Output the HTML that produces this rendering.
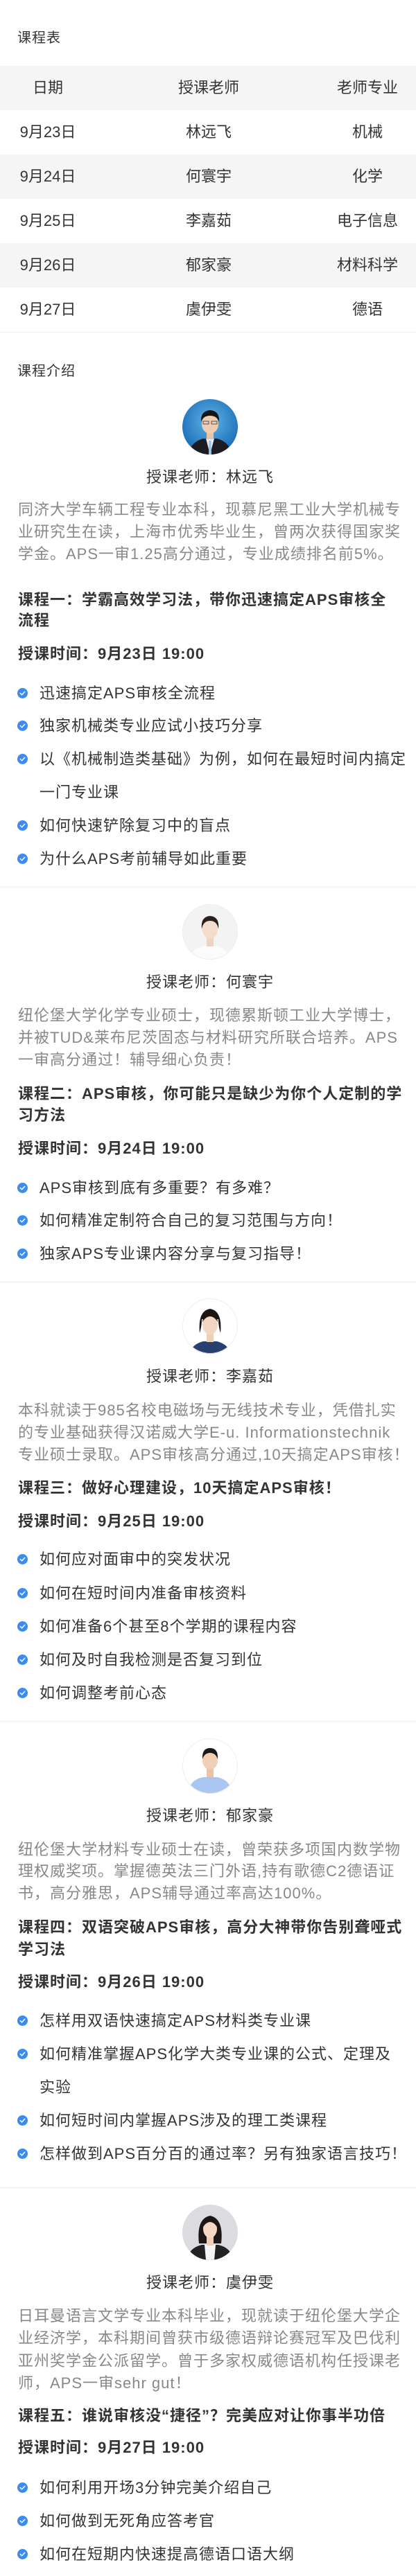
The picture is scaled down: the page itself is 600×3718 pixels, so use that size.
<!DOCTYPE html>
<html><head><meta charset="utf-8">
<style>
*{margin:0;padding:0;box-sizing:border-box}
body{width:600px;height:3718px;position:relative;background:#fff;font-family:"Liberation Sans","Noto Sans CJK SC",sans-serif;color:#333;overflow:hidden}
.t{position:absolute;left:26px;height:32px;line-height:32px;font-size:22px;letter-spacing:1px;white-space:nowrap}
.h{font-size:20px;left:25px}
.g{color:#888}
.b{font-weight:bold;color:#333}
.c{left:0;width:606px;text-align:center}
.li{left:57px}
.ic{position:absolute;left:25px;width:15px;height:15px}
.band{position:absolute;left:0;width:600px;height:64px;background:#f5f5f5}
.cell{position:absolute;height:32px;line-height:32px;font-size:22px;text-align:center;white-space:nowrap}
.c1{left:0;width:138px}.c2{left:200px;width:202px}.c3{left:460px;width:140px}
.div{position:absolute;left:0;width:600px;height:3px;background:#f7f7f7}
.av{position:absolute;left:263px;width:80px;height:80px}
</style></head><body>
<svg width="0" height="0" style="position:absolute"><defs><symbol id="ck" viewBox="0 0 15 15"><circle cx="7.5" cy="7.5" r="7.5" fill="#3a8cf4"/><path d="M4.3 7.6 L6.6 9.8 L10.7 5.4" fill="none" stroke="#fff" stroke-width="1.5" stroke-linecap="round" stroke-linejoin="round"/></symbol></defs></svg>

<div class="t h" style="top:39px">课程表</div>
<div class="band" style="top:95px"></div>
<div class="band" style="top:223px"></div>
<div class="band" style="top:351px"></div>
<div style="position:absolute;top:479px;left:0;width:600px;height:1px;background:#eee"></div>
<div class="cell c1" style="top:111px">日期</div><div class="cell c2" style="top:111px">授课老师</div><div class="cell c3" style="top:111px">老师专业</div>
<div class="cell c1" style="top:175px">9月23日</div><div class="cell c2" style="top:175px">林远飞</div><div class="cell c3" style="top:175px">机械</div>
<div class="cell c1" style="top:239px">9月24日</div><div class="cell c2" style="top:239px">何寰宇</div><div class="cell c3" style="top:239px">化学</div>
<div class="cell c1" style="top:303px">9月25日</div><div class="cell c2" style="top:303px">李嘉茹</div><div class="cell c3" style="top:303px">电子信息</div>
<div class="cell c1" style="top:367px">9月26日</div><div class="cell c2" style="top:367px">郁家豪</div><div class="cell c3" style="top:367px">材料科学</div>
<div class="cell c1" style="top:431px">9月27日</div><div class="cell c2" style="top:431px">虞伊雯</div><div class="cell c3" style="top:431px">德语</div>

<div class="t h" style="top:520px">课程介绍</div>

<!-- Section 1 -->
<svg class="av" style="top:576px" viewBox="0 0 80 80"><defs><clipPath id="a1"><circle cx="40" cy="40" r="40"/></clipPath><radialGradient id="g1" cx="50%" cy="40%" r="60%"><stop offset="0" stop-color="#5fb4e8"/><stop offset="1" stop-color="#1a6db5"/></radialGradient></defs><g clip-path="url(#a1)"><rect width="80" height="80" fill="url(#g1)"/><path d="M8 80 Q12 62 30 57 L50 57 Q68 62 72 80Z" fill="#1c1c22"/><path d="M34 57 L40 80 L46 57Z" fill="#e8eef5"/><path d="M38.5 60 L41.5 60 L42 80 L38 80Z" fill="#9cc3ea"/><rect x="35" y="46" width="10" height="12" fill="#e9c3a6"/><ellipse cx="40" cy="36" rx="12" ry="14" fill="#efcdb3"/><path d="M27 33 Q26 17 40 16 Q54 17 53 33 Q50 24 40 24 Q30 24 27 33Z" fill="#151515"/><rect x="30" y="32" width="8" height="4" fill="none" stroke="#333" stroke-width="0.8"/><rect x="42" y="32" width="8" height="4" fill="none" stroke="#333" stroke-width="0.8"/></g></svg>
<div class="t c" style="top:673px">授课老师：林远飞</div>
<div class="t g" style="top:720px">同济大学车辆工程专业本科，现慕尼黑工业大学机械专</div>
<div class="t g" style="top:752px">业研究生在读，上海市优秀毕业生，曾两次获得国家奖</div>
<div class="t g" style="top:784px">学金。APS一审1.25高分通过，专业成绩排名前5%。</div>
<div class="t b" style="top:850px">课程一：学霸高效学习法，带你迅速搞定APS审核全</div>
<div class="t b" style="top:880px">流程</div>
<div class="t b" style="top:928px">授课时间：9月23日 19:00</div>
<svg class="ic" style="top:993px"><use href="#ck"/></svg><div class="t li" style="top:985px">迅速搞定APS审核全流程</div>
<svg class="ic" style="top:1040px"><use href="#ck"/></svg><div class="t li" style="top:1032px">独家机械类专业应试小技巧分享</div>
<svg class="ic" style="top:1088px"><use href="#ck"/></svg><div class="t li" style="top:1080px">以《机械制造类基础》为例，如何在最短时间内搞定</div>
<div class="t li" style="top:1128px">一门专业课</div>
<svg class="ic" style="top:1184px"><use href="#ck"/></svg><div class="t li" style="top:1176px">如何快速铲除复习中的盲点</div>
<svg class="ic" style="top:1232px"><use href="#ck"/></svg><div class="t li" style="top:1224px">为什么APS考前辅导如此重要</div>
<div class="div" style="top:1279px"></div>

<!-- Section 2 -->
<svg class="av" style="top:1305px" viewBox="0 0 80 80"><defs><clipPath id="a2"><circle cx="40" cy="40" r="40"/></clipPath></defs><g clip-path="url(#a2)"><rect width="80" height="80" fill="#f3f3f3"/><path d="M10 80 Q14 64 32 60 L48 60 Q66 64 70 80Z" fill="#fbfbfb"/><rect x="35" y="48" width="10" height="13" fill="#efd2c0"/><ellipse cx="40" cy="36" rx="11" ry="14" fill="#f4dccd"/><path d="M28 36 Q26 18 40 17 Q54 18 52 36 Q50 24 40 24 Q30 24 28 36Z" fill="#2a1f1c"/></g><circle cx="40" cy="40" r="39.5" fill="none" stroke="#eee"/></svg>
<div class="t c" style="top:1402px">授课老师：何寰宇</div>
<div class="t g" style="top:1450px">纽伦堡大学化学专业硕士，现德累斯顿工业大学博士，</div>
<div class="t g" style="top:1482px">并被TUD&amp;莱布尼茨固态与材料研究所联合培养。APS</div>
<div class="t g" style="top:1514px">一审高分通过！辅导细心负责！</div>
<div class="t b" style="top:1563px">课程二：APS审核，你可能只是缺少为你个人定制的学</div>
<div class="t b" style="top:1594px">习方法</div>
<div class="t b" style="top:1642px">授课时间：9月24日 19:00</div>
<svg class="ic" style="top:1707px"><use href="#ck"/></svg><div class="t li" style="top:1699px">APS审核到底有多重要？有多难？</div>
<svg class="ic" style="top:1754px"><use href="#ck"/></svg><div class="t li" style="top:1746px">如何精准定制符合自己的复习范围与方向！</div>
<svg class="ic" style="top:1802px"><use href="#ck"/></svg><div class="t li" style="top:1794px">独家APS专业课内容分享与复习指导！</div>
<div class="div" style="top:1849px"></div>

<!-- Section 3 -->
<svg class="av" style="top:1874px" viewBox="0 0 80 80"><defs><clipPath id="a3"><circle cx="40" cy="40" r="40"/></clipPath></defs><g clip-path="url(#a3)"><rect width="80" height="80" fill="#fff"/><path d="M10 80 Q14 66 30 62 L50 62 Q66 66 70 80Z" fill="#27406e"/><rect x="35" y="50" width="10" height="13" fill="#efcfb8"/><path d="M25 50 Q22 18 40 15 Q58 18 55 50 Q52 40 52 30 L28 30 Q28 40 25 50Z" fill="#1a1412"/><ellipse cx="40" cy="38" rx="11" ry="14" fill="#f3d6c2"/><path d="M29 34 Q30 22 40 22 Q50 22 51 34 Q46 26 40 26 Q34 26 29 34Z" fill="#1a1412"/></g><circle cx="40" cy="40" r="39.5" fill="none" stroke="#eee"/></svg>
<div class="t c" style="top:1971px">授课老师：李嘉茹</div>
<div class="t g" style="top:2020px">本科就读于985名校电磁场与无线技术专业，凭借扎实</div>
<div class="t g" style="top:2052px">的专业基础获得汉诺威大学E-u. Informationstechnik</div>
<div class="t g" style="top:2084px">专业硕士录取。APS审核高分通过,10天搞定APS审核！</div>
<div class="t b" style="top:2132px">课程三：做好心理建设，10天搞定APS审核！</div>
<div class="t b" style="top:2180px">授课时间：9月25日 19:00</div>
<svg class="ic" style="top:2243px"><use href="#ck"/></svg><div class="t li" style="top:2235px">如何应对面审中的突发状况</div>
<svg class="ic" style="top:2292px"><use href="#ck"/></svg><div class="t li" style="top:2284px">如何在短时间内准备审核资料</div>
<svg class="ic" style="top:2340px"><use href="#ck"/></svg><div class="t li" style="top:2332px">如何准备6个甚至8个学期的课程内容</div>
<svg class="ic" style="top:2388px"><use href="#ck"/></svg><div class="t li" style="top:2380px">如何及时自我检测是否复习到位</div>
<svg class="ic" style="top:2436px"><use href="#ck"/></svg><div class="t li" style="top:2428px">如何调整考前心态</div>
<div class="div" style="top:2483px"></div>

<!-- Section 4 -->
<svg class="av" style="top:2509px" viewBox="0 0 80 80"><defs><clipPath id="a4"><circle cx="40" cy="40" r="40"/></clipPath></defs><g clip-path="url(#a4)"><rect width="80" height="80" fill="#fff"/><path d="M8 80 Q10 60 30 56 L50 56 Q70 60 72 80Z" fill="#a9c6f0"/><rect x="35" y="42" width="10" height="14" fill="#e9c4a8"/><ellipse cx="40" cy="32" rx="11" ry="13" fill="#f0cfb5"/><path d="M29 30 Q28 14 40 14 Q52 14 51 30 Q48 21 40 21 Q32 21 29 30Z" fill="#1a1a1a"/></g><circle cx="40" cy="40" r="39.5" fill="none" stroke="#eee"/></svg>
<div class="t c" style="top:2605px">授课老师：郁家豪</div>
<div class="t g" style="top:2654px">纽伦堡大学材料专业硕士在读，曾荣获多项国内数学物</div>
<div class="t g" style="top:2685px">理权威奖项。掌握德英法三门外语,持有歌德C2德语证</div>
<div class="t g" style="top:2717px">书，高分雅思，APS辅导通过率高达100%。</div>
<div class="t b" style="top:2766px">课程四：双语突破APS审核，高分大神带你告别聋哑式</div>
<div class="t b" style="top:2798px">学习法</div>
<div class="t b" style="top:2845px">授课时间：9月26日 19:00</div>
<svg class="ic" style="top:2909px"><use href="#ck"/></svg><div class="t li" style="top:2901px">怎样用双语快速搞定APS材料类专业课</div>
<svg class="ic" style="top:2957px"><use href="#ck"/></svg><div class="t li" style="top:2949px">如何精准掌握APS化学大类专业课的公式、定理及</div>
<div class="t li" style="top:2997px">实验</div>
<svg class="ic" style="top:3053px"><use href="#ck"/></svg><div class="t li" style="top:3045px">如何短时间内掌握APS涉及的理工类课程</div>
<svg class="ic" style="top:3101px"><use href="#ck"/></svg><div class="t li" style="top:3093px">怎样做到APS百分百的通过率？另有独家语言技巧！</div>
<div class="div" style="top:3156px"></div>

<!-- Section 5 -->
<svg class="av" style="top:3182px" viewBox="0 0 80 80"><defs><clipPath id="a5"><circle cx="40" cy="40" r="40"/></clipPath></defs><g clip-path="url(#a5)"><rect width="80" height="80" fill="#dcdce0"/><path d="M24 56 Q20 20 40 16 Q60 20 56 56Z" fill="#1d1716"/><path d="M6 80 Q10 62 28 58 L52 58 Q70 62 74 80Z" fill="#222"/><path d="M32 58 L48 58 L46 80 L34 80Z" fill="#f5f5f5"/><rect x="35" y="46" width="10" height="13" fill="#efcfb9"/><ellipse cx="40" cy="35" rx="10" ry="13" fill="#f4d8c5"/><path d="M30 32 Q31 21 40 21 Q49 21 50 32 Q45 25 40 25 Q35 25 30 32Z" fill="#1d1716"/></g></svg>
<div class="t c" style="top:3279px">授课老师：虞伊雯</div>
<div class="t g" style="top:3327px">日耳曼语言文学专业本科毕业，现就读于纽伦堡大学企</div>
<div class="t g" style="top:3359px">业经济学，本科期间曾获市级德语辩论赛冠军及巴伐利</div>
<div class="t g" style="top:3392px">亚州奖学金公派留学。曾于多家权威德语机构任授课老</div>
<div class="t g" style="top:3424px">师，APS一审sehr gut！</div>
<div class="t b" style="top:3471px">课程五：谁说审核没“捷径”？完美应对让你事半功倍</div>
<div class="t b" style="top:3517px">授课时间：9月27日 19:00</div>
<svg class="ic" style="top:3583px"><use href="#ck"/></svg><div class="t li" style="top:3575px">如何利用开场3分钟完美介绍自己</div>
<svg class="ic" style="top:3631px"><use href="#ck"/></svg><div class="t li" style="top:3623px">如何做到无死角应答考官</div>
<svg class="ic" style="top:3679px"><use href="#ck"/></svg><div class="t li" style="top:3671px">如何在短期内快速提高德语口语大纲</div>
</body></html>
